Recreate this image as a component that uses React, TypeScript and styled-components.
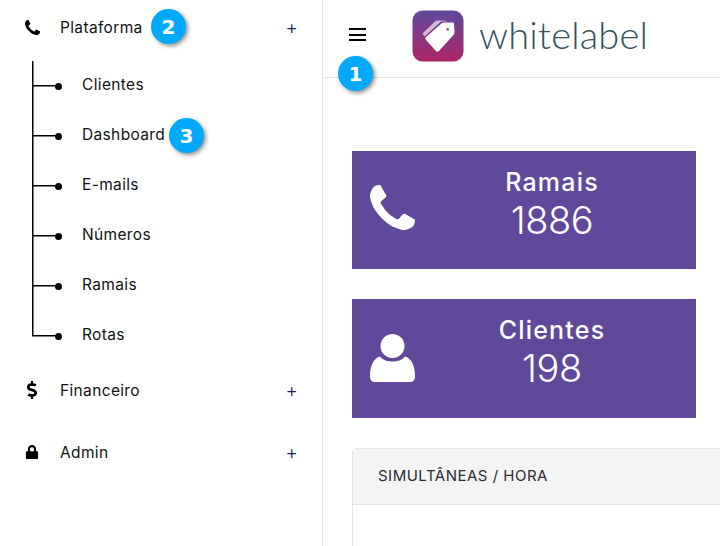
import styled, { createGlobalStyle } from 'styled-components';
import { FaDollarSign, FaLock } from 'react-icons/fa';

const GlobalStyle = createGlobalStyle`
  html, body {
    margin: 0;
    padding: 0;
    background: #fff;
    overflow: hidden;
  }
  body {
    font-family: 'Inter', 'Liberation Sans', sans-serif;
  }
`;

const Shell = styled.div`
  position: relative;
  display: flex;
  width: 720px;
  height: 546px;
  overflow: hidden;
`;

const Sidebar = styled.aside`
  flex: 0 0 323px;
  box-sizing: border-box;
  border-right: 1px solid #e6e6e6;
`;

const MenuRow = styled.div<{ $height: number }>`
  display: flex;
  align-items: center;
  height: ${(p) => p.$height}px;
  padding: 0 24px 0 24px;
  color: #111;
`;

const MenuIcon = styled.span<{ $size: number }>`
  display: flex;
  justify-content: center;
  width: 16px;
  margin-right: 20px;
  font-size: ${(p) => p.$size}px;
  color: #000;
`;

const MenuLabel = styled.span`
  flex: 1;
  font-size: 15.5px;
  letter-spacing: 0.35px;
`;

const Plus = styled.span`
  font-size: 19px;
  font-weight: 300;
  line-height: 1;
  color: #14224f;
`;

const SubList = styled.ul`
  list-style: none;
  margin: 7px 0 0 32px;
  padding: 0;
`;

const SubRow = styled.li`
  display: flex;
  align-items: center;
  height: 50px;
  font-size: 15.5px;
  letter-spacing: 0.35px;
  color: #111;
`;

const SubLabel = styled.span`
  margin-bottom: 4px;
`;

const Stem = styled.span<{ $last?: boolean }>`
  align-self: stretch;
  width: 23px;
  background:
    linear-gradient(#000, #000) left top / 1.5px ${(p) => (p.$last ? '50%' : '100%')} no-repeat,
    linear-gradient(#000, #000) left center / 100% 1.5px no-repeat;
`;

const Dot = styled.span`
  width: 7px;
  height: 7px;
  margin-right: 20px;
  border-radius: 50%;
  background: #000;
`;

const Main = styled.main`
  flex: 1;
  min-width: 0;
`;

const Header = styled.header`
  display: flex;
  align-items: center;
  box-sizing: border-box;
  height: 78px;
  padding: 0 0 6px 26px;
  border-bottom: 1px solid #e6e6e6;
`;

const Burger = styled.button`
  display: flex;
  flex-direction: column;
  gap: 3.5px;
  width: 17px;
  padding: 0;
  margin: 0 46px 2px 0;
  border: 0;
  background: none;

  span {
    height: 2px;
    background: #000;
  }
`;

const LogoText = styled.span`
  margin: 0 0 3px 15px;
  font-family: 'Lato', sans-serif;
  font-size: 38px;
  font-weight: 300;
  letter-spacing: 0.2px;
  color: #34505f;
`;

const Content = styled.div`
  display: flex;
  flex-direction: column;
  gap: 30px;
  padding: 73px 0 0 29px;
`;

const StatCard = styled.section<{ $height: number }>`
  display: flex;
  align-items: flex-start;
  box-sizing: border-box;
  width: 344px;
  height: ${(p) => p.$height}px;
  padding: 15px 7px 0 18px;
  background: #60489b;
  color: #fff;
`;

const StatIcon = styled.svg`
  flex: 0 0 45px;
  width: 45px;
  height: 45px;
  margin-top: 19px;
  fill: #fff;
`;

const UserIcon = styled(StatIcon)`
  height: 48px;
  margin-top: 20px;
`;

const StatBody = styled.div`
  flex: 1;
  text-align: center;
`;

const StatTitle = styled.div`
  font-size: 25px;
  font-weight: 500;
  line-height: 33px;
  letter-spacing: 1.2px;
`;

const StatValue = styled.div`
  font-size: 38px;
  font-weight: 300;
  line-height: 42px;
  letter-spacing: -0.4px;
`;

const Panel = styled.section`
  box-sizing: border-box;
  width: 420px;
  height: 160px;
  border: 1px solid #e4e4e4;
  border-radius: 4px;
`;

const PanelHeader = styled.div`
  box-sizing: border-box;
  height: 56px;
  padding: 0 25px;
  border-bottom: 1px solid #e4e4e4;
  background: #f4f4f4;
  font-size: 15px;
  line-height: 54px;
  letter-spacing: 0.5px;
  color: #2b2b33;
`;

const Badge = styled.span<{ $x: number; $y: number }>`
  position: absolute;
  left: ${(p) => p.$x}px;
  top: ${(p) => p.$y}px;
  display: flex;
  align-items: center;
  justify-content: center;
  width: 35px;
  height: 35px;
  border-radius: 50%;
  background: #00a9fb;
  box-shadow: 2px 2px 4px rgba(0, 0, 0, 0.45);
  font-family: 'DejaVu Sans', sans-serif;
  font-size: 20px;
  font-weight: 700;
  color: #fff;
`;

const PHONE_PATH =
  'M1408 1112q0 27-10 70.5t-21 68.5q-21 50-122 106-94 51-186 51-27 0-53-3.5t-57.5-12.5-47-14.5-55.5-20.5-49-18q-98-35-175-83-127-79-264-216t-216-264q-48-77-83-175-3-9-18-49t-20.5-55.5-14.5-47-12.5-57.5-3.5-53q0-92 51-186 56-101 106-122 25-11 68.5-21t70.5-10q14 0 21 3 18 6 53 76 11 19 30 54t35 63.5 31 53.5q3 4 17.5 25t21.5 35.5 7 28.5q0 20-28.5 50t-62 55-62 53-28.5 46q0 9 5 22.5t8.5 20.5 14 24 11.5 19q76 137 174 235t235 174q2 1 19 11.5t24 14 20.5 8.5 22.5 5q18 0 46-28.5t53-62 55-62 50-28.5q14 0 28.5 7t35.5 21.5 25 17.5q25 15 53.5 31t63.5 35 54 30q70 35 76 53 3 7 3 21z';

const TagLogo = () => (
  <svg width="52" height="52" viewBox="0 0 52 52">
    <defs>
      <linearGradient id="logoFill" x1="0" y1="0" x2="0" y2="1">
        <stop offset="0" stopColor="#5e4a9c" />
        <stop offset="1" stopColor="#ae2468" />
      </linearGradient>
    </defs>
    <rect x="0.5" y="0.5" width="51" height="51" rx="10" fill="url(#logoFill)" />
    <path
      d="M10.5 23.5 L23 11.5 Q24 10.5 26 10.5 L33 10.5 L34 11.5 L29 11.5 L12.5 26.5 Z"
      fill="#fff"
      fillOpacity="0.65"
    />
    <path
      fillRule="evenodd"
      fill="#fff"
      d="M14 27 L30 13 Q31 12.5 33 12.5 L41 12.5 Q42 12.5 42 14 L42.5 22 Q42.5 24 41 25.5 L27 41 Q25.5 42.5 24 41 L14 30 Q12.5 28.5 14 27 Z M35.7 18 a1.3 1.3 0 1 0 0.01 0 Z"
    />
  </svg>
);

export default function App() {
  return (
    <>
      <GlobalStyle />
      <Shell>
        <Sidebar>
          <MenuRow $height={54}>
            <MenuIcon $size={15}>
              <svg width="15" height="15" viewBox="0 0 1408 1408" fill="currentColor">
                <path d={PHONE_PATH} />
              </svg>
            </MenuIcon>
            <MenuLabel>Plataforma</MenuLabel>
            <Plus>+</Plus>
          </MenuRow>
          <SubList>
            {['Clientes', 'Dashboard', 'E-mails', 'Números', 'Ramais', 'Rotas'].map((item, i) => (
              <SubRow key={item}>
                <Stem $last={i === 5} />
                <Dot />
                <SubLabel>{item}</SubLabel>
              </SubRow>
            ))}
          </SubList>
          <MenuRow $height={58}>
            <MenuIcon $size={18}>
              <FaDollarSign />
            </MenuIcon>
            <MenuLabel>Financeiro</MenuLabel>
            <Plus>+</Plus>
          </MenuRow>
          <MenuRow $height={66}>
            <MenuIcon $size={14}>
              <FaLock />
            </MenuIcon>
            <MenuLabel>Admin</MenuLabel>
            <Plus>+</Plus>
          </MenuRow>
        </Sidebar>
        <Main>
          <Header>
            <Burger aria-label="menu">
              <span />
              <span />
              <span />
            </Burger>
            <TagLogo />
            <LogoText>whitelabel</LogoText>
          </Header>
          <Content>
            <StatCard $height={118}>
              <StatIcon viewBox="0 0 1408 1408">
                <path d={PHONE_PATH} />
              </StatIcon>
              <StatBody>
                <StatTitle>Ramais</StatTitle>
                <StatValue>1886</StatValue>
              </StatBody>
            </StatCard>
            <StatCard $height={119}>
              <UserIcon viewBox="0 0 45 48">
                <circle cx="22.5" cy="12" r="12" />
                <path d="M10 22.5 C13 26.5 18 27.5 22.5 27.5 C27 27.5 32 26.5 35 22.5 C41 24 45 31 45 42 C45 46 43 48 40 48 L5 48 C2 48 0 46 0 42 C0 31 4 24 10 22.5 Z" />
              </UserIcon>
              <StatBody>
                <StatTitle>Clientes</StatTitle>
                <StatValue>198</StatValue>
              </StatBody>
            </StatCard>
            <Panel>
              <PanelHeader>SIMULTÂNEAS / HORA</PanelHeader>
            </Panel>
          </Content>
        </Main>
        <Badge $x={338} $y={56}>1</Badge>
        <Badge $x={151} $y={9}>2</Badge>
        <Badge $x={169} $y={118}>3</Badge>
      </Shell>
    </>
  );
}
